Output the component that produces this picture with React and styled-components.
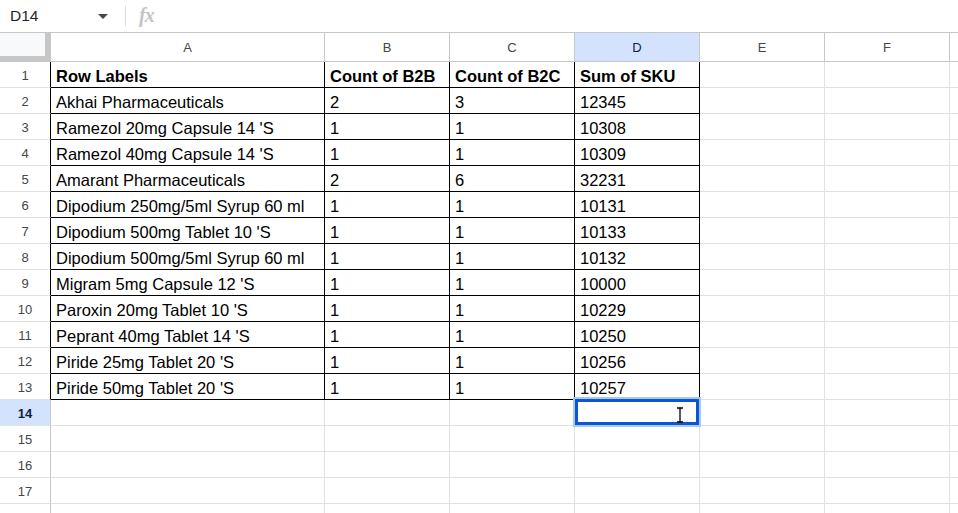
import React from "react";
import styled, { createGlobalStyle } from "styled-components";

const Global = createGlobalStyle`
  html, body { margin: 0; padding: 0; background: #fff; overflow: hidden; }
  body { font-family: "Liberation Sans", Arial, sans-serif; }
  #root { height: 513px; overflow: hidden; }
`;

const Toolbar = styled.div`
  height: 33px;
  box-sizing: border-box;
  border-bottom: 1px solid #c7c7c7;
  display: flex;
  align-items: center;
  padding-left: 10px;
`;

const NameBox = styled.div`
  width: 88px;
  font-size: 15.5px;
  color: #1f1f1f;
`;

const Caret = styled.div`
  width: 0;
  height: 0;
  border-left: 5px solid transparent;
  border-right: 5px solid transparent;
  border-top: 5px solid #444746;
  margin-top: 1px;
`;

const Divider = styled.div`
  width: 1px;
  height: 20px;
  background: #dadce0;
  margin: 0 13px 0 17px;
`;

const Fx = styled.span`
  font-family: "Liberation Serif", serif;
  font-style: italic;
  font-weight: bold;
  font-size: 20px;
  color: #c4c4c4;
  letter-spacing: -1px;
  margin-top: -1px;
`;

const Sheet = styled.div`
  position: relative;
  display: grid;
  grid-template-columns: 51px 274px repeat(5, 125px) 1fr;
  grid-auto-rows: 26px;
  grid-template-rows: 29px;
`;

const Corner = styled.div`
  box-sizing: border-box;
  background: #f8f9fa;
  border-right: 6px solid #c7c7c7;
  border-bottom: 6px solid #c7c7c7;
`;

const ColHead = styled.div`
  box-sizing: border-box;
  border-right: 1px solid #c7c7c7;
  border-bottom: 1px solid #c7c7c7;
  background: ${(p) => (p.$active ? "#d3e3fd" : "#fff")};
  color: ${(p) => (p.$active ? "#0b1f48" : "#444746")};
  font-size: 13px;
  display: flex;
  align-items: center;
  justify-content: center;
  padding-top: 1px;
`;

const RowHead = styled.div`
  box-sizing: border-box;
  border-right: 1px solid ${(p) => (p.$edge ? "#000" : "#c7c7c7")};
  border-bottom: 1px solid #e1e1e1;
  background: ${(p) => (p.$active ? "#d3e3fd" : "#fff")};
  color: ${(p) => (p.$active ? "#0b1f48" : "#444746")};
  font-weight: ${(p) => (p.$active ? "bold" : "normal")};
  font-size: 13px;
  display: flex;
  align-items: center;
  justify-content: center;
  padding-top: 2px;
`;

const Cell = styled.div`
  box-sizing: border-box;
  border-right: 1px solid ${(p) => (p.$data ? "#000" : "#e1e1e1")};
  border-bottom: 1px solid ${(p) => (p.$data ? "#000" : "#e1e1e1")};
  font-size: 16.5px;
  font-weight: ${(p) => (p.$bold ? "bold" : "normal")};
  color: #000;
  padding: 3px 5px 0;
  display: flex;
  align-items: center;
  white-space: nowrap;
  overflow: hidden;
`;

const Selection = styled.div`
  position: absolute;
  left: 575px;
  top: 366px;
  width: 124px;
  height: 26px;
  box-sizing: border-box;
  border: 3px solid #0b57d0;
  box-shadow: 0 0 0 2px #a8c7fa;
  pointer-events: none;
`;

const Cursor = styled.svg`
  position: absolute;
  left: 676px;
  top: 374px;
`;

const header = ["Row Labels", "Count of B2B", "Count of B2C", "Sum of SKU"];
const rows = [
  ["Akhai Pharmaceuticals", "2", "3", "12345"],
  ["Ramezol 20mg Capsule 14 'S", "1", "1", "10308"],
  ["Ramezol 40mg Capsule 14 'S", "1", "1", "10309"],
  ["Amarant Pharmaceuticals", "2", "6", "32231"],
  ["Dipodium 250mg/5ml Syrup 60 ml", "1", "1", "10131"],
  ["Dipodium 500mg Tablet 10 'S", "1", "1", "10133"],
  ["Dipodium 500mg/5ml Syrup 60 ml", "1", "1", "10132"],
  ["Migram 5mg Capsule 12 'S", "1", "1", "10000"],
  ["Paroxin 20mg Tablet 10 'S", "1", "1", "10229"],
  ["Peprant 40mg Tablet 14 'S", "1", "1", "10250"],
  ["Piride 25mg Tablet 20 'S", "1", "1", "10256"],
  ["Piride 50mg Tablet 20 'S", "1", "1", "10257"],
];

const cols = ["A", "B", "C", "D", "E", "F", ""];

export default function App() {
  const all = [header, ...rows];
  const lines = [];
  for (let r = 1; r <= 18; r++) {
    const data = all[r - 1];
    lines.push(
      <RowHead key={"h" + r} $active={r === 14} $edge={r <= 13}>
        {r}
      </RowHead>
    );
    for (let c = 0; c < 7; c++) {
      const isData = !!data && c < 4;
      lines.push(
        <Cell key={r + "-" + c} $data={isData} $bold={r === 1}>
          {isData ? data[c] : ""}
        </Cell>
      );
    }
  }
  return (
    <>
      <Global />
      <Toolbar>
        <NameBox>D14</NameBox>
        <Caret />
        <Divider />
        <Fx>fx</Fx>
      </Toolbar>
      <Sheet>
        <Corner />
        {cols.map((c, i) => (
          <ColHead key={i} $active={c === "D"}>
            {c}
          </ColHead>
        ))}
        {lines}
        <Selection />
        <Cursor width="8" height="16" viewBox="0 0 8 16">
          <path d="M1 1h6M4 1v14M1 15h6" stroke="#000" strokeWidth="1.3" fill="none" />
        </Cursor>
      </Sheet>
    </>
  );
}
